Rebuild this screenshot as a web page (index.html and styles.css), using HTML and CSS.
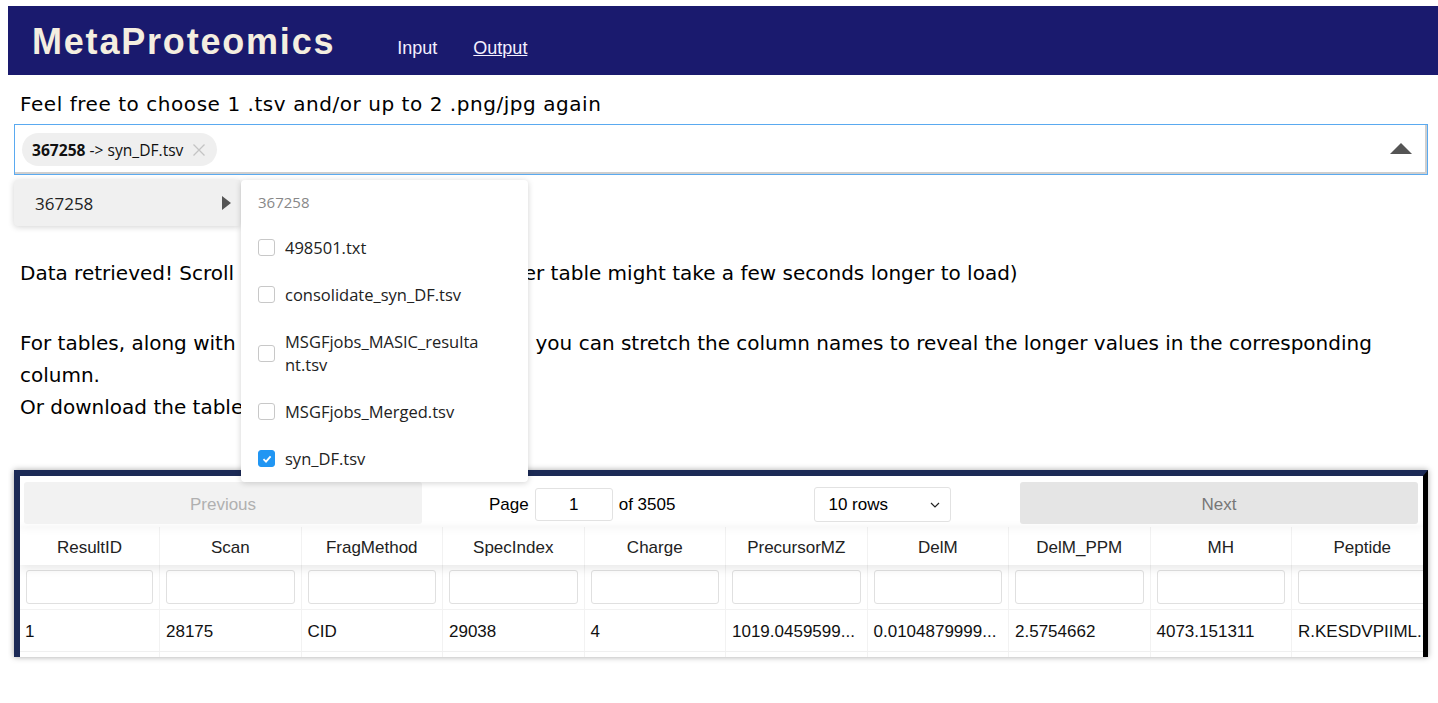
FILE: index.html
```html
<!DOCTYPE html>
<html>
<head>
<meta charset="utf-8">
<link rel="stylesheet" href="styles.css">
</head>
<body>
<header class="topbar">
  <div class="brand">MetaProteomics</div>
  <nav class="nav">
    <a class="nav-link">Input</a>
    <a class="nav-link active">Output</a>
  </nav>
</header>
<main class="main">
  <p class="lead">Feel free to choose 1 .tsv and/or up to 2 .png/jpg again</p>
  <div class="picker">
    <div class="select-box">
      <span class="chip"><b>367258</b>&nbsp;-&gt; syn_DF.tsv<span class="chip-x">
        <svg width="14" height="14" viewBox="0 0 14 14"><path d="M1.5 1.5 L12.5 12.5 M12.5 1.5 L1.5 12.5" stroke="#c4c4c4" stroke-width="1.3" fill="none"/></svg></span></span>
      <span class="caret"></span>
    </div>
    <div class="menu">
      <div class="menu-col menu-left">
        <div class="menu-parent"><span>367258</span><span class="tri-right"></span></div>
      </div>
      <div class="menu-col menu-right">
        <div class="menu-head">367258</div>
        <div class="menu-item"><span class="cb"></span><span class="mi-text">498501.txt</span></div>
        <div class="menu-item"><span class="cb"></span><span class="mi-text">consolidate_syn_DF.tsv</span></div>
        <div class="menu-item"><span class="cb"></span><span class="mi-text">MSGFjobs_MASIC_resulta<br>nt.tsv</span></div>
        <div class="menu-item"><span class="cb"></span><span class="mi-text">MSGFjobs_Merged.tsv</span></div>
        <div class="menu-item"><span class="cb checked"><svg width="12" height="12" viewBox="0 0 12 12"><path d="M2.5 6.2 L5 8.6 L9.6 3.4" stroke="#fff" stroke-width="1.8" fill="none"/></svg></span><span class="mi-text">syn_DF.tsv</span></div>
      </div>
    </div>
  </div>
  <p class="msg">Data retrieved! Scroll down to view them (the larger table might take a few seconds longer to load)</p>
  <p class="msg">For tables, along with the sorting and filtering tool, you can stretch the column names to reveal the longer values in the corresponding column.<br>Or download the table below.</p>

  <div class="table-wrap">
    <div class="pager">
      <div class="pg-btn-cell"><button class="pg-btn prev">Previous</button></div>
      <div class="pg-center">
        <span class="pg-info">Page <span class="pg-input">1</span> of 3505</span>
        <span class="pg-size">10 rows<svg width="10" height="6" viewBox="0 0 10 6"><path d="M1 1 L5 5 L9 1" stroke="#222" stroke-width="1.2" fill="none"/></svg></span>
      </div>
      <div class="pg-btn-cell"><button class="pg-btn next">Next</button></div>
    </div>
    <div class="grid">
      <div class="row head">
        <div class="cell c-first">ResultID</div><div class="cell">Scan</div><div class="cell">FragMethod</div><div class="cell">SpecIndex</div><div class="cell">Charge</div><div class="cell">PrecursorMZ</div><div class="cell">DelM</div><div class="cell">DelM_PPM</div><div class="cell">MH</div><div class="cell">Peptide</div>
      </div>
      <div class="row filters">
        <div class="cell c-first"><span class="f-input"></span></div><div class="cell"><span class="f-input"></span></div><div class="cell"><span class="f-input"></span></div><div class="cell"><span class="f-input"></span></div><div class="cell"><span class="f-input"></span></div><div class="cell"><span class="f-input"></span></div><div class="cell"><span class="f-input"></span></div><div class="cell"><span class="f-input"></span></div><div class="cell"><span class="f-input"></span></div><div class="cell"><span class="f-input"></span></div>
      </div>
      <div class="row data">
        <div class="cell c-first">1</div><div class="cell">28175</div><div class="cell">CID</div><div class="cell">29038</div><div class="cell">4</div><div class="cell">1019.0459599...</div><div class="cell">0.0104879999...</div><div class="cell">2.5754662</div><div class="cell">4073.151311</div><div class="cell">R.KESDVPIIML...</div>
      </div>
      <div class="row data">
        <div class="cell c-first"></div><div class="cell"></div><div class="cell"></div><div class="cell"></div><div class="cell"></div><div class="cell"></div><div class="cell"></div><div class="cell"></div><div class="cell"></div><div class="cell"></div>
      </div>
    </div>
  </div>
</main>
</body>
</html>
```

FILE: styles.css
```css
html, body { margin: 0; padding: 0; }
body {
  margin: 6px 0 0 8px;
  background: #fff;
  color: #000;
  font-family: "DejaVu Sans", sans-serif;
  overflow: hidden;
  height: 697px;
}
.topbar {
  height: 69px;
  background: #1a1a6e;
  display: flex;
  align-items: center;
}
.brand {
  font-family: "Liberation Sans", Arial, sans-serif;
  font-weight: bold;
  font-size: 36px;
  letter-spacing: 1.8px;
  color: #f4eee0;
  margin-left: 24px;
  margin-top: 2px;
}
.nav { display: flex; gap: 36px; margin-left: 62px; margin-top: 15px; }
.nav-link {
  font-family: "Liberation Sans", Arial, sans-serif;
  font-size: 18px;
  color: #f4f0ff;
}
.nav-link.active { text-decoration: underline; }
.main { padding: 0 10px 0 6px; }
.lead {
  margin: 14px 0 5px 6px;
  font-size: 20px;
  line-height: 30px;
  letter-spacing: 0.55px;
}
.picker { position: relative; }
.select-box {
  height: 49px;
  border: 1px solid #5aaaf0;
  box-shadow: inset -2px -2px 0 #cfcfcf;
  display: flex;
  align-items: center;
  padding-left: 7px;
  position: relative;
}
.chip {
  display: inline-flex;
  align-items: center;
  height: 33px;
  padding: 0 11px 0 10px;
  background: #efefef;
  border-radius: 17px;
  font-family: "Open Sans", sans-serif;
  font-size: 15.6px;
  color: #111;
}
.chip b { font-weight: 700; }
.chip-x { margin-left: 9px; display: inline-flex; }
.caret {
  position: absolute;
  right: 15px;
  top: 18px;
  width: 0; height: 0;
  border-left: 11px solid transparent;
  border-right: 11px solid transparent;
  border-bottom: 11px solid #555;
}
.menu {
  position: absolute;
  left: 0;
  top: 56px;
  display: flex;
  align-items: flex-start;
  z-index: 10;
  font-family: "Open Sans", sans-serif;
}
.menu-col {
  background: #fff;
  box-shadow: 0 1px 6px rgba(0,0,0,0.18);
  border-radius: 4px;
}
.menu-left { width: 226px; background: #f0f0f0; border-radius: 4px 0 0 4px; }
.menu-parent {
  height: 46px;
  display: flex;
  align-items: center;
  justify-content: space-between;
  padding: 0 9px 0 21px;
  font-size: 17px;
  color: #222;
}
.tri-right {
  width: 0; height: 0;
  border-top: 7px solid transparent;
  border-bottom: 7px solid transparent;
  border-left: 9px solid #555;
}
.menu-right { width: 287px; margin-left: 1px; padding-bottom: 0; }
.menu-head {
  height: 44px;
  display: flex;
  align-items: center;
  padding-left: 17px;
  font-size: 15px;
  color: #888;
}
.menu-item {
  display: flex;
  align-items: center;
  padding: 12px 10px 12px 17px;
  font-size: 16.5px;
  line-height: 23px;
  color: #222;
}
.cb {
  width: 15px; height: 15px;
  border: 1px solid #c8c8c8;
  border-radius: 3px;
  margin-right: 10px;
  flex: none;
  display: inline-flex;
  align-items: center;
  justify-content: center;
  background: #fff;
}
.cb.checked { background: #2196f3; border-color: #2196f3; }
.msg {
  margin: 82px 0 0 6px;
  font-size: 20px;
  line-height: 32px;
}
.msg + .msg { margin-top: 38px; }
.table-wrap {
  margin-top: 47px;
  height: 181px;
  border: 5px solid #1c2a56;
  border-left-width: 6px;
  border-top-width: 6px;
  border-right-color: #000;
  border-bottom: none;
  box-shadow: 0 0 6px rgba(0,0,0,0.35);
  overflow: hidden;
  font-family: "Open Sans", sans-serif;
}
.pager {
  display: flex;
  align-items: center;
  padding: 6px 4px 3px 4px;
  height: 42px;
  box-shadow: 0 0 10px rgba(0,0,0,0.06);
  position: relative;
  z-index: 2;
}
.pg-btn-cell { flex: 0 0 398px; height: 42px; }
.pg-btn {
  width: 100%; height: 100%;
  border: none;
  border-radius: 3px;
  font-family: "Liberation Sans", Arial, sans-serif;
  font-size: 17px;
  padding: 3px 0 0;
}
.pg-btn.prev { background: #f2f2f2; color: #b0b0b0; }
.pg-btn.next { background: #e5e5e5; color: #777; margin-left: -1px; }
.pg-center {
  flex: 1;
  display: flex;
  align-items: center;
  padding-left: 67px;
  padding-top: 3px;
}
.pg-info {
  font-family: "Liberation Sans", Arial, sans-serif;
  font-size: 17px;
  display: flex;
  align-items: center;
  gap: 6px;
}
.pg-input {
  display: inline-flex;
  align-items: center;
  justify-content: center;
  width: 76px;
  height: 31px;
  border: 1px solid #e2e2e2;
  border-radius: 3px;
}
.pg-size {
  margin-left: 139px;
  display: inline-flex;
  align-items: center;
  justify-content: space-between;
  width: 112px;
  height: 33px;
  padding: 0 10px 0 13px;
  border: 1px solid #e2e2e2;
  border-radius: 3px;
  font-family: "Liberation Sans", Arial, sans-serif;
  font-size: 17px;
}
.grid { width: 1420px; }
.row { display: flex; }
.cell {
  flex: 0 0 141.5px;
  box-sizing: border-box;
  border-right: 1px solid rgba(0,0,0,0.05);
  font-size: 16px;
  color: #111;
  overflow: hidden;
  white-space: nowrap;
}
.cell.c-first { flex-basis: 140px; }
.row.head {
  height: 38px;
  align-items: stretch;
  box-shadow: 0 3px 10px rgba(0,0,0,0.10);
  position: relative;
  z-index: 1;
}
.row.head .cell {
  display: flex;
  align-items: center;
  justify-content: center;
  padding-top: 4px;
  font-family: "Liberation Sans", Arial, sans-serif;
  font-size: 17px;
  color: #222;
}
.row.filters { height: 44px; border-bottom: 1px solid rgba(0,0,0,0.05); }
.row.filters .cell { padding: 5px 6px; }
.f-input {
  display: block;
  height: 32px;
  border: 1px solid #e0e0e0;
  border-radius: 3px;
  background: #fff;
}
.row.data { height: 41px; border-bottom: 1px solid rgba(0,0,0,0.06); }
.row.data .cell {
  display: flex;
  align-items: center;
  padding-left: 6px;
  padding-top: 3px;
  font-family: "Liberation Sans", Arial, sans-serif;
  font-size: 17px;
}
.row.data .c-first { padding-left: 5px; }
```
